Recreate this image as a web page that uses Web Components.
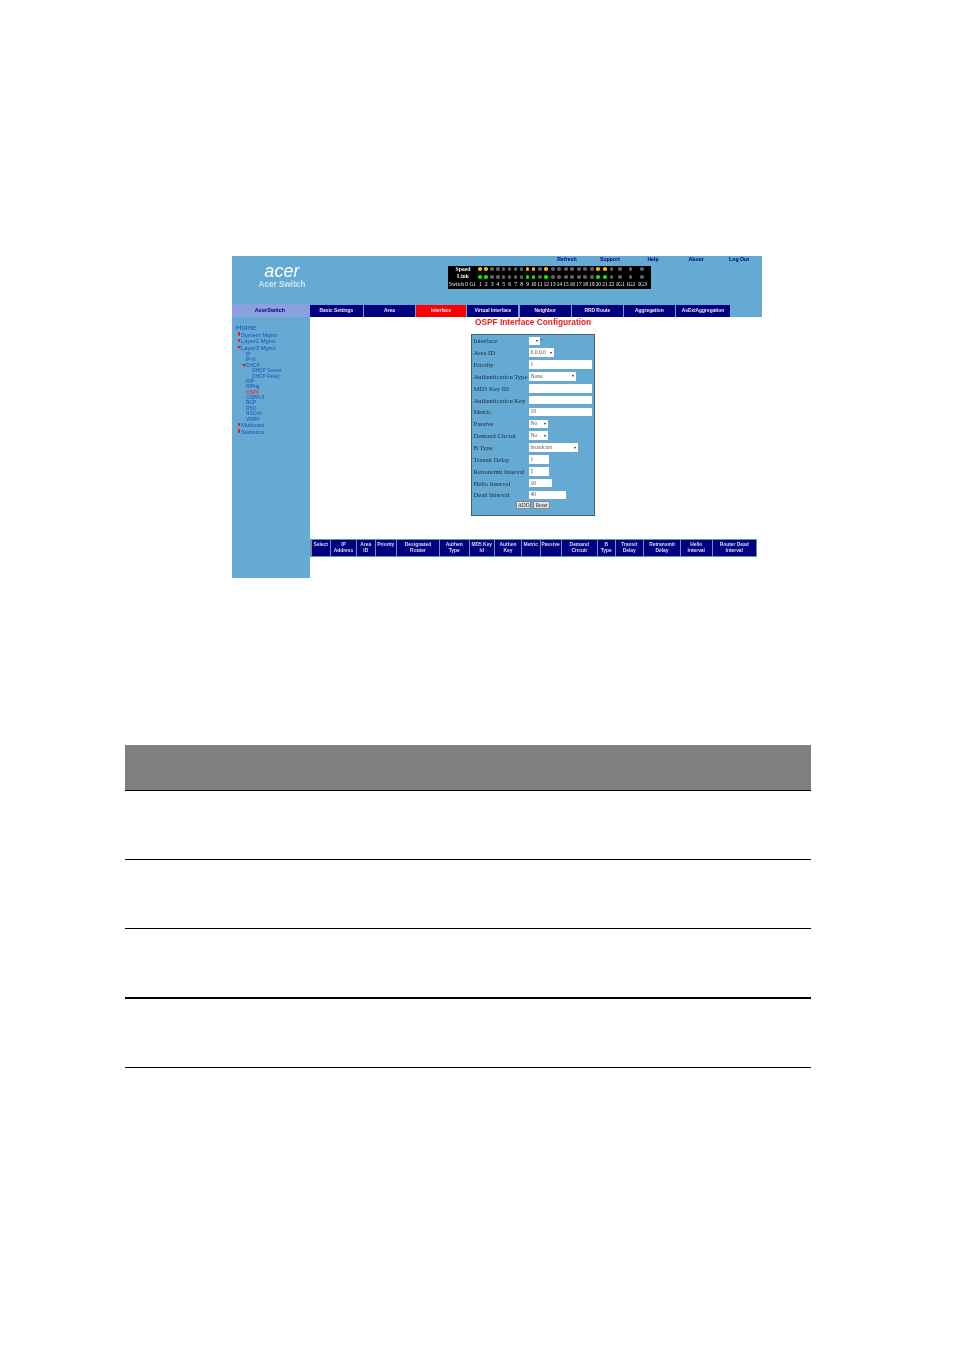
<!DOCTYPE html>
<html>
<head>
<meta charset="utf-8">
<title>OSPF Interface Configuration</title>
<style>
    html, body { margin: 0; background: #fff; }
</style>
</head>
<body>
<manual-page></manual-page>
<script>
const BLUE = '#64aad2';
const NAVY = '#000080';

class SwitchBrand extends HTMLElement {
    constructor() {
        super();
        this.attachShadow({ mode: 'open' });
        this.shadowRoot.innerHTML = `
            <style>
                :host { display: flex; flex-direction: column; align-items: center; width: 100px; padding-top: 7px; box-sizing: border-box; }
                .logo { font: italic 400 18px/17px "Liberation Sans", sans-serif; color: #fff; letter-spacing: 0.1px; }
                .name { font: 700 8.2px/10px "Liberation Sans", sans-serif; color: #d5e5ee; margin-top: -0.5px; }
            </style>
            <div class="logo">acer</div>
            <div class="name">Acer Switch</div>
        `;
    }
}
customElements.define('switch-brand', SwitchBrand);

class TopLinks extends HTMLElement {
    constructor() {
        super();
        this.attachShadow({ mode: 'open' });
        const links = ['Refresh', 'Support', 'Help', 'About', 'Log Out'];
        this.shadowRoot.innerHTML = `
            <style>
                :host { display: grid; grid-template-columns: repeat(5, 43px); height: 5px; padding: 0 0 0 97.5px; font: 700 5.2px/5px "Liberation Sans", sans-serif; color: ${NAVY}; }
                span { text-align: center; white-space: nowrap; }
            </style>
            ${links.map(l => `<span>${l}</span>`).join('')}
        `;
    }
}
customElements.define('top-links', TopLinks);

class LedPanel extends HTMLElement {
    constructor() {
        super();
        this.attachShadow({ mode: 'open' });
        const widths = [29, 6, 6, 6, 5.5, 6, 6, 6, 6, 6, 6, 6.5, 6.5, 6.5, 6.5, 6.5, 6.5, 6.5, 6.5, 6.5, 6.5, 6.5, 7, 10, 11, 12];
        const lit = [1, 2, 9, 10, 12, 20, 21];
        const names = [];
        for (let i = 1; i <= 22; i++) names.push(String(i));
        names.push('1G1', '1G2', '1G3');
        const led = (color, i) => `<i style="background:${lit.includes(i) ? color : '#626262'}"></i>`;
        let cells = '<b>Speed</b>';
        for (let i = 1; i <= 25; i++) cells += led('#ffb400', i);
        cells += '<b>Link</b>';
        for (let i = 1; i <= 25; i++) cells += led('#00f000', i);
        cells += '<span class="head">Switch 0 G1</span>';
        names.forEach(n => { cells += `<span>${n}</span>`; });
        this.shadowRoot.innerHTML = `
            <style>
                :host { display: grid; width: 203px; height: 23px; box-sizing: border-box; background: #000; grid-template-columns: ${widths.map(w => w + 'px').join(' ')}; grid-auto-rows: 7.5px; align-items: center; justify-items: center; font: 5.8px/7px "Liberation Serif", serif; color: #eee; }
                b { font-weight: 700; padding-left: 1px; }
                i { width: 3.6px; height: 3.6px; border-radius: 50%; }
                span { white-space: nowrap; letter-spacing: -0.25px; }
                .head { font-size: 5.4px; letter-spacing: 0; }
            </style>
            ${cells}
        `;
    }
}
customElements.define('led-panel', LedPanel);

class SwitchHeader extends HTMLElement {
    constructor() {
        super();
        this.attachShadow({ mode: 'open' });
        this.shadowRoot.innerHTML = `
            <style>
                :host { display: flex; height: 48px; background: ${BLUE}; }
                .gap { width: 116px; }
                .right { display: flex; flex-direction: column; gap: 4px; padding-top: 0.5px; }
            </style>
            <switch-brand></switch-brand>
            <div class="gap"></div>
            <div class="right">
                <top-links></top-links>
                <led-panel></led-panel>
            </div>
        `;
    }
}
customElements.define('switch-header', SwitchHeader);

class SideTree extends HTMLElement {
    constructor() {
        super();
        this.attachShadow({ mode: 'open' });
        const top = (t, open) => `<div class="top"><i class="${open ? 'down' : 'dot'}"></i>${t}</div>`;
        const sub = (t, cls) => `<div class="sub ${cls || ''}">${t}</div>`;
        this.shadowRoot.innerHTML = `
            <style>
                :host { display: block; width: 78px; background: ${BLUE}; font-family: "Liberation Sans", sans-serif; color: #2450b0; }
                .title { height: 13px; background: #8ba0e0; color: ${NAVY}; font: 700 5.6px/13px "Liberation Sans", sans-serif; text-align: center; padding-right: 2px; box-sizing: border-box; }
                .tree { padding: 6.5px 0 0 4px; }
                .home { font-size: 7.6px; line-height: 8px; }
                .top { position: relative; font-size: 5.9px; line-height: 6.5px; padding-left: 5px; white-space: nowrap; }
                .subs { padding: 1px 0 0.5px; }
                .sub { font-size: 4.9px; line-height: 5.38px; padding-left: 10px; white-space: nowrap; }
                .sub.deep { padding-left: 16px; }
                .sub.on { color: #f02020; }
                .sub.open { position: relative; }
                .dot { position: absolute; left: 1.5px; top: 0.5px; width: 2px; height: 3.5px; background: #e81818; border-radius: 1px; }
                .down, .tri { position: absolute; width: 0; height: 0; border-left: 2px solid transparent; border-right: 2px solid transparent; border-top: 3px solid #e81818; }
                .down { left: 0.5px; top: 1.5px; }
                .tri { left: 6px; top: 1.5px; }
            </style>
            <div class="title">AcerSwitch</div>
            <div class="tree">
                <div class="home">Home</div>
                ${top('System Mgmt')}
                ${top('Layer2 Mgmt')}
                ${top('Layer3 Mgmt', true)}
                <div class="subs">
                    ${sub('IP')}
                    ${sub('IPv6')}
                    <div class="sub open"><i class="tri"></i>DHCP</div>
                    ${sub('DHCP Server', 'deep')}
                    ${sub('DHCP Relay', 'deep')}
                    ${sub('RIP')}
                    ${sub('RIPng')}
                    ${sub('OSPF', 'on')}
                    ${sub('OSPFv3')}
                    ${sub('BGP')}
                    ${sub('RSO')}
                    ${sub('RSOv6')}
                    ${sub('VRRP')}
                </div>
                ${top('Multicast')}
                ${top('Statistics')}
            </div>
        `;
    }
}
customElements.define('side-tree', SideTree);

class TabBar extends HTMLElement {
    constructor() {
        super();
        this.attachShadow({ mode: 'open' });
        const tabs = ['Basic Settings', 'Area', 'Interface', 'Virtual Interface', 'Neighbor', 'RRD Route', 'Aggregation', 'AsExtAggregation'];
        this.shadowRoot.innerHTML = `
            <style>
                :host { display: grid; grid-template-columns: 52.7px 50.5px 49.7px 51px 50.7px 50.5px 50.7px 53.5px; gap: 1.5px; box-sizing: border-box; height: 13px; padding-top: 0.5px; background: ${BLUE}; font: 700 4.9px/12.5px "Liberation Sans", sans-serif; color: #e8e8f8; }
                div { background: ${NAVY}; text-align: center; white-space: nowrap; }
                .on { background: #ff0000; }
            </style>
            ${tabs.map(t => `<div class="${t === 'Interface' ? 'on' : ''}">${t}</div>`).join('')}
        `;
    }
}
customElements.define('tab-bar', TabBar);

class OspfField extends HTMLElement {
    constructor() {
        super();
        this.attachShadow({ mode: 'open' });
        this.shadowRoot.innerHTML = `
            <style>
                :host { display: block; font: 5.6px/9px "Liberation Serif", serif; color: #333; }
                .row { display: grid; grid-template-columns: 55px 1fr; align-items: center; height: 11.85px; white-space: nowrap; color: #1c2c3c; font-size: 6.6px; }
                .box { display: flex; align-items: center; justify-content: space-between; height: 8.6px; background: #fff; box-sizing: border-box; padding: 0 2px; font-size: 5.6px; color: #555; }
                .arrow { width: 0; height: 0; border-left: 1.3px solid transparent; border-right: 1.3px solid transparent; border-top: 2px solid #222; }
                .wrap { display: flex; align-items: center; gap: 1px; }
                .star { font-size: 5px; color: #222; }
            </style>
            <div class="row">
                <span><slot></slot></span>
                <div class="wrap">
                    <div class="box" style="width:${this.getAttribute('w')}px">
                        <span>${this.getAttribute('value') || ''}</span>
                        ${this.hasAttribute('select') ? '<i class="arrow"></i>' : ''}
                    </div>
                    ${this.hasAttribute('star') ? '<span class="star">*</span>' : ''}
                </div>
            </div>
        `;
    }
}
customElements.define('ospf-field', OspfField);

class OspfForm extends HTMLElement {
    constructor() {
        super();
        this.attachShadow({ mode: 'open' });
        this.shadowRoot.innerHTML = `
            <style>
                :host { display: block; width: 124px; height: 182px; box-sizing: border-box; background: ${BLUE}; border: 1.5px solid #3f6478; padding: 0 0 0 1.5px; }
                .buttons { display: flex; justify-content: center; gap: 2px; margin-top: 0.5px; padding-right: 1px; }
                button { all: unset; font: 5.4px/7px "Liberation Serif", serif; color: #222; background: #e4e4e4; border: 0.5px solid #888; box-sizing: border-box; height: 7.5px; text-align: center; }
            </style>
            <ospf-field w="11" select star>Interface</ospf-field>
            <ospf-field w="25" select value="0.0.0.0">Area ID</ospf-field>
            <ospf-field w="63" value="1">Priority</ospf-field>
            <ospf-field w="47" select value="None">Authentication Type</ospf-field>
            <ospf-field w="63">MD5 Key ID</ospf-field>
            <ospf-field w="63">Authentication Key</ospf-field>
            <ospf-field w="63" value="10">Metric</ospf-field>
            <ospf-field w="19" select value="No">Passive</ospf-field>
            <ospf-field w="19" select value="No">Demand Circuit</ospf-field>
            <ospf-field w="49" select value="broadcast">B Type</ospf-field>
            <ospf-field w="20" value="1">Transit Delay</ospf-field>
            <ospf-field w="20" value="5">Retransmit Interval</ospf-field>
            <ospf-field w="23" value="10">Hello Interval</ospf-field>
            <ospf-field w="37" value="40">Dead Interval</ospf-field>
            <div class="buttons">
                <button style="width:15px">ADD</button>
                <button style="width:17px">Reset</button>
            </div>
        `;
    }
}
customElements.define('ospf-form', OspfForm);

class OspfTable extends HTMLElement {
    constructor() {
        super();
        this.attachShadow({ mode: 'open' });
        const cols = [
            ['Select', 18.5], ['IP<br>Address', 25], ['Area<br>ID', 17.5], ['Priority', 20.5],
            ['Designated<br>Router', 42], ['Authen<br>Type', 28.5], ['MD5 Key<br>Id', 24.5], ['Authen<br>Key', 26],
            ['Metric', 17.5], ['Passive', 20], ['Demand<br>Circuit', 35.5], ['B<br>Type', 16.5],
            ['Transit<br>Delay', 27.5], ['Retransmit<br>Delay', 36], ['Hello<br>Interval', 30.5], ['Router Dead<br>Interval', 43.5]
        ];
        this.shadowRoot.innerHTML = `
            <style>
                :host { display: grid; grid-template-columns: ${cols.map(c => c[1] + 'px').join(' ')}; gap: 1px; width: 447px; box-sizing: border-box; height: 18px; margin-top: 23px; padding: 1px 1.5px; background: #5f98a8; font: 700 4.9px/6px "Liberation Sans", sans-serif; color: #dcdcf0; }
                div { background: ${NAVY}; text-align: center; white-space: nowrap; overflow: hidden; padding-top: 1.5px; box-sizing: border-box; }
            </style>
            ${cols.map(c => `<div>${c[0]}</div>`).join('')}
        `;
    }
}
customElements.define('ospf-table', OspfTable);

class SwitchShot extends HTMLElement {
    constructor() {
        super();
        this.attachShadow({ mode: 'open' });
        this.shadowRoot.innerHTML = `
            <style>
                :host { display: block; width: 530px; height: 322px; filter: blur(0.55px); }
                .body { display: flex; height: 274px; }
                side-tree { flex: none; }
                .main { flex: 1; min-width: 0; }
                h1 { margin: 0; height: 11px; font: 700 8.3px/10px "Liberation Sans", sans-serif; color: #f01818; padding-left: 165px; white-space: nowrap; }
                ospf-form { margin: 6px 0 0 161px; }
            </style>
            <switch-header></switch-header>
            <div class="body">
                <side-tree></side-tree>
                <div class="main">
                    <tab-bar></tab-bar>
                    <h1>OSPF Interface Configuration</h1>
                    <ospf-form></ospf-form>
                    <ospf-table></ospf-table>
                </div>
            </div>
        `;
    }
}
customElements.define('switch-shot', SwitchShot);

class DocTable extends HTMLElement {
    constructor() {
        super();
        this.attachShadow({ mode: 'open' });
        this.shadowRoot.innerHTML = `
            <style>
                :host { display: block; width: 686px; }
                .head { height: 45px; background: #808080; border-bottom: 1px solid #000; }
                .row { height: 68px; border-bottom: 1px solid #000; }
                .row.heavy { border-bottom-width: 2px; }
            </style>
            <div class="head"></div>
            <div class="row"></div>
            <div class="row"></div>
            <div class="row heavy"></div>
            <div class="row"></div>
        `;
    }
}
customElements.define('doc-table', DocTable);

class ManualPage extends HTMLElement {
    constructor() {
        super();
        this.attachShadow({ mode: 'open' });
        this.shadowRoot.innerHTML = `
            <style>
                :host { display: block; width: 954px; height: 1369px; overflow: hidden; box-sizing: border-box; padding-top: 256px; }
                switch-shot { margin-left: 232px; }
                doc-table { margin: 167px 0 0 125px; }
            </style>
            <switch-shot></switch-shot>
            <doc-table></doc-table>
        `;
    }
}
customElements.define('manual-page', ManualPage);
</script>
</body>
</html>
